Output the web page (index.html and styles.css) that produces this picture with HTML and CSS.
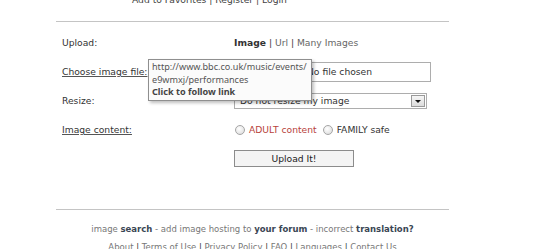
FILE: index.html
```html
<!DOCTYPE html>
<html lang="en">
<head>
  <meta charset="UTF-8">
  <title>Image Upload</title>
  <link rel="stylesheet" href="styles.css">
</head>
<body>
  <div class="page">
    <div class="top-links">
      <a href="#">Add to Favorites</a> | <a href="#">Register</a> | <a href="#">Login</a>
    </div>
    <div class="rule"></div>

    <form class="upload-form">
      <div class="label">Upload:</div>
      <div class="field tabs">
        <b>Image</b> | <a href="#">Url</a> | <a href="#">Many Images</a>
      </div>

      <div class="label"><u>Choose image file:</u></div>
      <div class="field">
        <div class="file-box">
          <span class="file-btn">Choose File</span>
          <span class="file-name">No file chosen</span>
        </div>
      </div>

      <div class="label">Resize:</div>
      <div class="field">
        <div class="select-box">
          <span>Do not resize my image</span>
          <span class="select-arrow"></span>
        </div>
      </div>

      <div class="label"><u>Image content:</u></div>
      <div class="field radios">
        <span class="radio"></span><span class="adult">ADULT content</span>
        <span class="radio"></span><span>FAMILY safe</span>
      </div>

      <div class="label"></div>
      <div class="field">
        <div class="button">Upload It!</div>
      </div>
    </form>

    <div class="rule rule-bottom"></div>

    <div class="footer">
      <p>image <b>search</b> - add image hosting to <b>your forum</b> - incorrect <b>translation?</b></p>
      <p>About <span class="sep">|</span> Terms of Use <span class="sep">|</span> Privacy Policy <span class="sep">|</span> FAQ <span class="sep">|</span> Languages <span class="sep">|</span> Contact Us</p>
    </div>
  </div>

  <div class="tooltip">
    http://www.bbc.co.uk/music/events/<br>
    e9wmxj/performances<br>
    <b>Click to follow link</b>
  </div>
</body>
</html>
```

FILE: styles.css
```css
body {
  margin: 0;
  padding: 0;
  background: white;
  font-family: "DejaVu Sans", Verdana, sans-serif;
  font-size: 9.2px;
  color: #333;
  overflow: hidden;
}
a {
  color: #666;
  text-decoration: none;
}
.page {
  width: 393px;
  margin-left: 56px;
}
.top-links {
  margin-top: -6px;
  height: 14px;
  line-height: 12px;
  padding-left: 76px;
  color: #444;
}
.top-links a {
  color: #444;
}
.rule {
  border-top: 1px solid #c4c4c4;
  margin-top: 13px;
}
.upload-form {
  display: grid;
  grid-template-columns: 172px 1fr;
  grid-auto-rows: 29px;
  align-items: center;
  margin-top: 6px;
  padding-left: 6px;
}
.label u {
  text-decoration-color: #555;
}
.tabs b {
  color: #333;
}
.file-box {
  display: flex;
  align-items: center;
  width: 195px;
  height: 18px;
  border: 1px solid #adadad;
}
.file-btn {
  width: 64px;
  margin-left: 6px;
  color: #333;
  white-space: nowrap;
  overflow: hidden;
}
.file-name {
  margin-left: 2px;
}
.select-box {
  display: flex;
  align-items: center;
  justify-content: space-between;
  width: 186px;
  height: 14px;
  border: 1px solid #adadad;
  padding-left: 5px;
}
.select-arrow {
  position: relative;
  width: 12px;
  height: 10px;
  margin-right: 1px;
  border: 1px solid #9a9a9a;
  background: linear-gradient(#f6f6f6, #dcdcdc);
}
.select-arrow::after {
  content: "";
  position: absolute;
  left: 3px;
  top: 4px;
  border-left: 3px solid transparent;
  border-right: 3px solid transparent;
  border-top: 3px solid #111;
}
.radios {
  display: flex;
  align-items: center;
}
.radio {
  width: 8px;
  height: 8px;
  border-radius: 50%;
  border: 1px solid #a5a5a5;
  background: radial-gradient(circle at 40% 35%, #fff, #d8d8d8);
  margin: 0 4px 0 1px;
}
.adult {
  color: #b8433b;
  margin-right: 5px;
}
.button {
  width: 118px;
  height: 15px;
  line-height: 15px;
  border: 1px solid #8c8c8c;
  background: #f4f4f4;
  text-align: center;
  color: #222;
}
.rule-bottom {
  margin-top: 36px;
}
.footer {
  text-align: center;
  color: #777;
  font-size: 8.5px;
}
.footer p {
  margin: 0;
  line-height: 18px;
}
.footer p:first-child {
  margin-top: 10px;
}
.footer b {
  color: #3a4654;
}
.footer .sep {
  color: #333;
}
.tooltip {
  position: absolute;
  left: 148px;
  top: 59px;
  width: 157px;
  height: 37px;
  padding: 1px 2px 2px 3px;
  font-family: "Noto Sans", "Open Sans", sans-serif;
  font-size: 9.1px;
  line-height: 12.5px;
  color: #555;
  background: #fbfbfb;
  border: 1px solid #8f8f8f;
  box-shadow: 2px 2px 3px rgba(0, 0, 0, 0.25);
  white-space: nowrap;
}
.tooltip b {
  color: #444;
}
```
